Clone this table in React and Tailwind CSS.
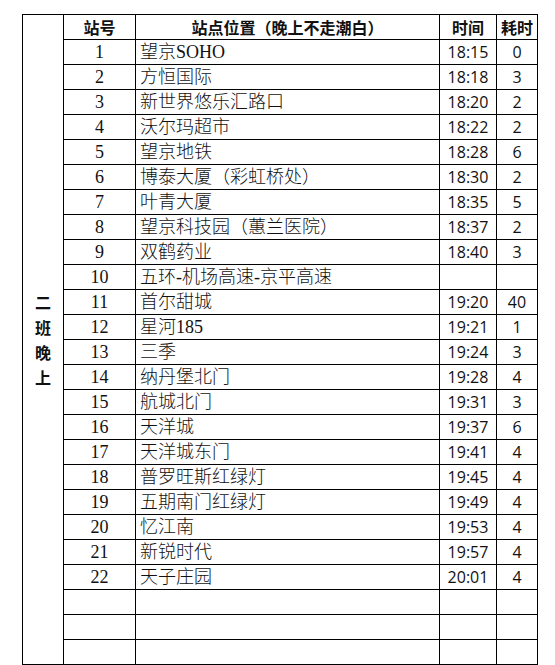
import React from 'react';

const rows = [
  ['1', '望京SOHO', '18:15', '0'],
  ['2', '方恒国际', '18:18', '3'],
  ['3', '新世界悠乐汇路口', '18:20', '2'],
  ['4', '沃尔玛超市', '18:22', '2'],
  ['5', '望京地铁', '18:28', '6'],
  ['6', '博泰大厦（彩虹桥处）', '18:30', '2'],
  ['7', '叶青大厦', '18:35', '5'],
  ['8', '望京科技园（蕙兰医院）', '18:37', '2'],
  ['9', '双鹤药业', '18:40', '3'],
  ['10', '五环-机场高速-京平高速', '', ''],
  ['11', '首尔甜城', '19:20', '40'],
  ['12', '星河185', '19:21', '1'],
  ['13', '三季', '19:24', '3'],
  ['14', '纳丹堡北门', '19:28', '4'],
  ['15', '航城北门', '19:31', '3'],
  ['16', '天洋城', '19:37', '6'],
  ['17', '天洋城东门', '19:41', '4'],
  ['18', '普罗旺斯红绿灯', '19:45', '4'],
  ['19', '五期南门红绿灯', '19:49', '4'],
  ['20', '忆江南', '19:53', '4'],
  ['21', '新锐时代', '19:57', '4'],
  ['22', '天子庄园', '20:01', '4'],
  ['', '', '', ''],
  ['', '', '', ''],
  ['', '', '', ''],
];

const serif = "font-['Liberation_Serif','Noto_Sans_CJK_SC',serif]";
const cjk = "font-['Liberation_Serif','Noto_Sans_CJK_SC',serif] font-light";
const sans = "font-['Open_Sans','Noto_Sans_CJK_SC',sans-serif]";
const bold = "font-['Noto_Sans_CJK_SC',sans-serif] font-bold";

export default function App() {
  return (
    <div className="w-[555px] h-[665px] bg-white pt-[14px] pl-[22px] overflow-hidden">
      <table className="border-collapse table-fixed text-[#111]">
        <colgroup>
          <col className="w-[41px]" />
          <col className="w-[72px]" />
          <col className="w-[304px]" />
          <col className="w-[57px]" />
          <col className="w-[41px]" />
        </colgroup>
        <tbody>
          <tr className="h-[25px]">
            <td rowSpan={26} className={`border border-black text-center align-middle p-0 text-[16px] leading-[25px] ${bold}`}>
              <div className="flex flex-col items-center">
                <span>二</span>
                <span>班</span>
                <span>晚</span>
                <span>上</span>
              </div>
            </td>
            <td className={`border border-black text-center p-0 text-[16px] leading-none ${bold}`}>站号</td>
            <td className={`border border-black text-center p-0 text-[16px] leading-none ${bold}`}>站点位置（晚上不走潮白）</td>
            <td className={`border border-black text-center p-0 text-[16px] leading-none ${bold}`}>时间</td>
            <td className={`border border-black text-center p-0 text-[16px] leading-none ${bold}`}>耗时</td>
          </tr>
          {rows.map((r, i) => (
            <tr key={i} className="h-[25px]">
              <td className={`border border-black text-center p-0 text-[18px] leading-none ${serif}`}>{r[0]}</td>
              <td className={`border border-black text-left pl-[4px] p-0 text-[18px] leading-none whitespace-nowrap ${cjk}`}>{r[1]}</td>
              <td className={`border border-black text-center p-0 text-[16px] leading-none ${sans}`}>{r[2]}</td>
              <td className={`border border-black text-center p-0 text-[16px] leading-none ${sans}`}>{r[3]}</td>
            </tr>
          ))}
        </tbody>
      </table>
    </div>
  );
}
